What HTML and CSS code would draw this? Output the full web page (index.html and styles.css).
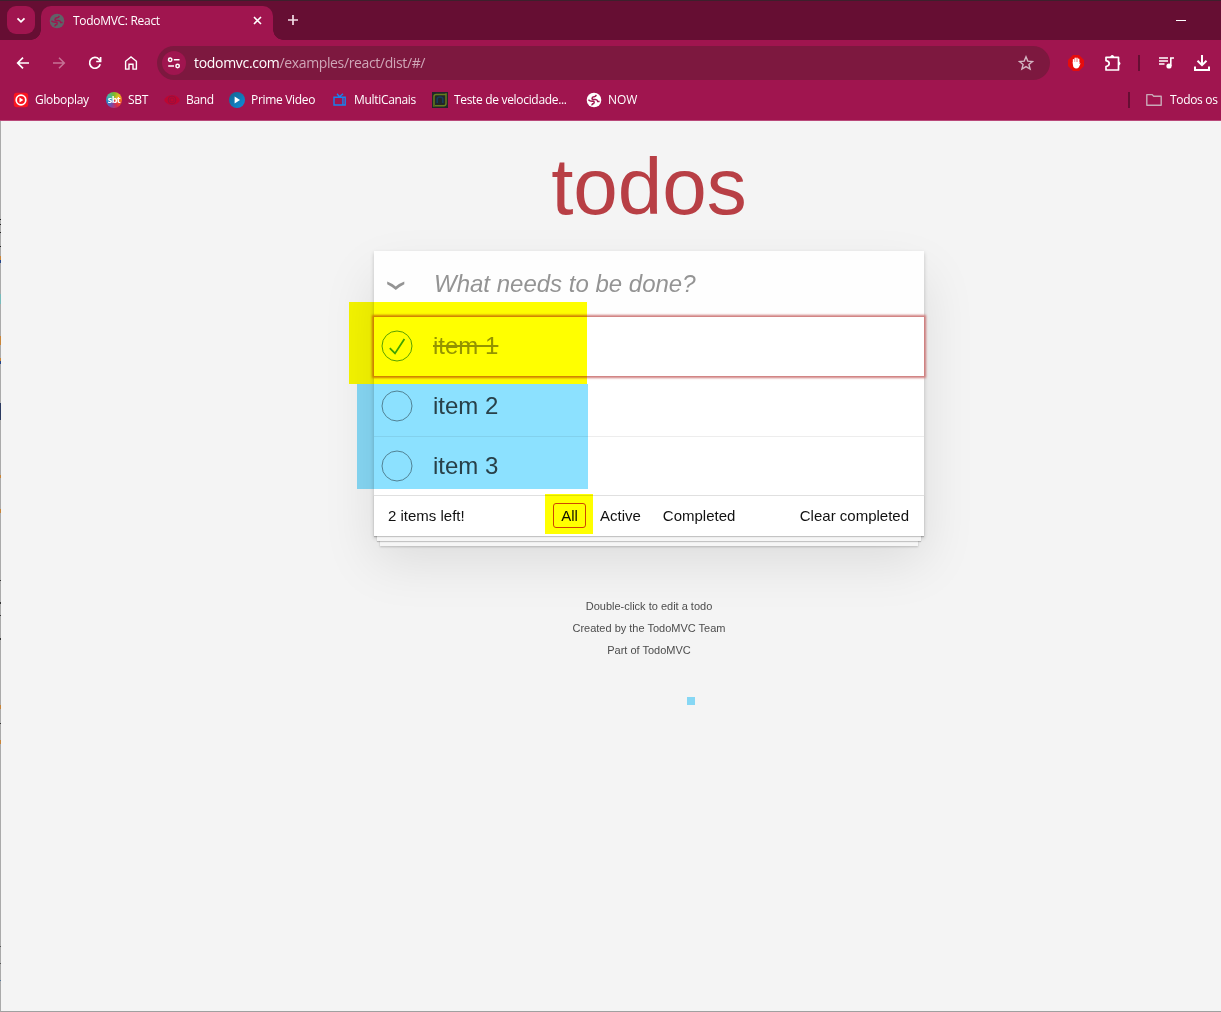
FILE: index.html
```html
<!DOCTYPE html>
<html lang="en">
<head>
<meta charset="utf-8">
<title>TodoMVC: React</title>
<link rel="stylesheet" href="styles.css">
</head>
<body>
<div class="window">
  <svg width="0" height="0" class="defs">
    <symbol id="globe" viewBox="0 0 16 16"><circle cx="8" cy="8" r="7.3" fill="currentColor"/><path class="land" d="M10.2 2.8Q10 4.6 8 4.8T6 6.7Q6.8 7.8 9 7.5T11.7 9.4H13.6M2.4 7.8Q4 9.5 6.6 9.3T7.6 11.6Q5.8 11.8 6 13.4" fill="none" stroke-width="1.5"/></symbol>
  </svg>
  <header class="tabstrip">
    <div class="tabsearch"><svg width="10" height="7" viewBox="0 0 10 7"><path d="M1.5 1.3 5 4.8 8.5 1.3" fill="none" stroke="#fff" stroke-width="1.8"/></svg></div>
    <div class="tab">
      <svg class="globe gray" width="16" height="16"><use href="#globe"/></svg>
      <span class="tabname">TodoMVC: React</span>
      <svg class="close" width="9" height="9" viewBox="0 0 9 9"><path d="M1 1 8 8M8 1 1 8" stroke="#fff" stroke-width="1.6"/></svg>
    </div>
    <svg class="newtab" width="12" height="12" viewBox="0 0 12 12"><path d="M6 1V11M1 6H11" stroke="#f2dce6" stroke-width="1.7"/></svg>
    <div class="minimize"></div>
  </header>
  <nav class="toolbar">
    <svg class="nav" width="16" height="16" viewBox="0 0 16 16"><path d="M14 8H3M8 2.7 2.7 8 8 13.3" fill="none" stroke="#fff" stroke-width="1.7"/></svg>
    <svg class="nav dim" width="16" height="16" viewBox="0 0 16 16"><path d="M2 8H13M8 2.7 13.3 8 8 13.3" fill="none" stroke="#fff" stroke-width="1.5"/></svg>
    <svg class="nav" width="16" height="16" viewBox="0 0 16 16"><path d="M13.2 9.3A5.4 5.4 0 1 1 12 4.2L13.4 6M13.6 2V6.5H9.2" fill="none" stroke="#fff" stroke-width="1.7"/></svg>
    <svg class="nav" width="16" height="16" viewBox="0 0 16 16"><path d="M2.6 14.1V6.3L8 2 13.4 6.3V14.1H10V9.3H6V14.1Z" fill="none" stroke="#fff" stroke-width="1.4"/></svg>
    <div class="address">
      <div class="siteinfo"><svg width="14" height="12" viewBox="0 0 14 12"><g fill="none" stroke="#fff" stroke-width="1.5"><circle cx="3.2" cy="2.8" r="1.7"/><circle cx="10.6" cy="9" r="1.7"/><path d="M6.8 2.8H12.5M1.2 9H7"/></g></svg></div>
      <span class="url"><b>todomvc.com</b>/examples/react/dist/#/</span>
      <svg class="star" width="16" height="16" viewBox="0 0 16 16"><path d="M8 1.8 9.8 6.1 14.5 6.5 10.9 9.5 12.1 14.1 8 11.6 3.9 14.1 5.1 9.5 1.5 6.5 6.2 6.1Z" fill="none" stroke="#d3b5c2" stroke-width="1.4"/></svg>
    </div>
    <svg class="hand" width="16" height="16" viewBox="0 0 16 16"><path d="M5 0H11L16 5V11L11 16H5L0 11V5Z" fill="#e60c0c"/><path d="M5.5 8V4.6M7.2 8V3.2M9 8V3.2M10.7 8V4.2" stroke="#fff" stroke-width="1.4" stroke-linecap="round"/><path d="M4.8 7H11.4V9L12.7 8.2 10.9 12.2Q9.5 13.9 6.9 13.3Q4.8 12.3 4.8 9Z" fill="#fff"/></svg>
    <svg class="puzzle" width="18" height="18" viewBox="0 0 18 18"><path d="M2 3.3H14.5V16H2V12.6Q5.2 12 5.2 9.6T2 6.7Z" fill="none" stroke="#fff" stroke-width="1.7" stroke-linejoin="round"/><path d="M6.3 3.2V2.5Q8.2 -.4 10.2 2.5V3.2M14.5 7.4H15Q18 9.5 15 11.6H14.5" fill="#fff"/></svg>
    <i class="divider"></i>
    <svg class="media" width="17" height="14" viewBox="0 0 17 14"><path d="M1 2H10M1 5H10M1 8H6.5M12.8 10V2H16" fill="none" stroke="#fff" stroke-width="1.6"/><circle cx="11" cy="10" r="2.6" fill="#fff"/></svg>
    <svg class="download" width="18" height="18" viewBox="0 0 18 18"><path d="M9 1V10M4.5 6.8 9 11.2 13.5 6.8M2 12.5V16H16V12.5" fill="none" stroke="#fff" stroke-width="2"/></svg>
  </nav>
  <nav class="bookmarks">
    <div class="bm"><svg width="16" height="16" viewBox="0 0 16 16"><rect x=".8" y=".8" width="14.4" height="14.4" rx="3" fill="#f91420"/><circle cx="8" cy="8" r="4.8" fill="none" stroke="#fff" stroke-width="1.7"/><path d="M6.5 5.6 10.4 8 6.5 10.4Z" fill="#fff"/></svg><span>Globoplay</span></div>
    <div class="bm"><span class="sbt">sbt</span><span>SBT</span></div>
    <div class="bm"><svg width="16" height="16" viewBox="0 0 16 16"><path d="M.2 8Q2 3.2 8 3.2T15.8 8Q14 12.8 8 12.8T.2 8Z" fill="#bd0631"/><circle cx="8" cy="8" r="3.9" fill="none" stroke="#94103f" stroke-width="1"/><circle cx="8" cy="8" r="2" fill="none" stroke="#94103f" stroke-width=".8"/></svg><span>Band</span></div>
    <div class="bm"><svg width="16" height="16" viewBox="0 0 16 16"><defs><linearGradient id="pv" x2="1" y2="1"><stop stop-color="#14648c"/><stop offset="1" stop-color="#0e8cdc"/></linearGradient></defs><circle cx="8" cy="8" r="8" fill="url(#pv)"/><path d="M5.6 4.6 11 8 5.6 11.4Z" fill="#fff"/></svg><span>Prime Video</span></div>
    <div class="bm"><svg width="16" height="16" viewBox="0 0 16 16"><path d="M2 5.2H13.2V13H2ZM10.9 5.2V13M5 1.8 7.5 4.8 11 1.8" fill="none" stroke="#1583ef" stroke-width="1.4"/></svg><span>MultiCanais</span></div>
    <div class="bm"><svg width="16" height="16" viewBox="0 0 16 16"><path d="M0 0H16V16H0Z" fill="#222629"/><path d="M1.2 14H2V4.5Q2 2.5 4.2 2.5H13.5M14.8 2H14V11.5Q14 13.8 11.8 13.8H3" fill="none" stroke="#657c1c" stroke-width="1.5"/><path d="M5.2 11V7Q5.2 5 8 5T10.8 7V11" fill="none" stroke="#163d59" stroke-width="1.6"/></svg><span>Teste de velocidade...</span></div>
    <div class="bm now"><svg class="globe white" width="16" height="16"><use href="#globe"/></svg><span>NOW</span></div>
    <i class="divider"></i>
    <div class="bm folder"><svg width="16" height="14" viewBox="0 0 16 14"><path d="M.8 1.6H6L7.7 3.2H15.2V12.3H.8Z" fill="none" stroke="#c9a9b7" stroke-width="1.4" stroke-linejoin="round"/></svg><span>Todos os</span></div>
  </nav>
  <main class="page">
    <div class="column">
      <h1>todos</h1>
      <section class="todoapp">
        <div class="entry"><svg width="20" height="12" viewBox="0 0 20 12"><path d="M1.2 1.6Q6.5 3.6 9.7 6.6 13 3.6 18.3 1.6V4.2Q13.2 6.8 9.8 10 6.2 6.8 1.2 4.2Z" fill="#949494"/></svg><span>What needs to be done?</span></div>
        <ul>
          <li class="done"><svg width="34" height="34" viewBox="0 0 34 34"><circle cx="17" cy="17" r="15" fill="none" stroke="#59a193"/><path d="M9.8 19.2 15 24.4 24.4 10" fill="none" stroke="#3ea390" stroke-width="1.8"/></svg><label>item 1</label></li>
          <li><svg width="34" height="34" viewBox="0 0 34 34"><circle cx="17" cy="17" r="15" fill="none" stroke="#949494"/></svg><label>item 2</label></li>
          <li><svg width="34" height="34" viewBox="0 0 34 34"><circle cx="17" cy="17" r="15" fill="none" stroke="#949494"/></svg><label>item 3</label></li>
        </ul>
        <footer>
          <span class="count">2 items left!</span>
          <a class="selected">All</a><a class="active">Active</a><a class="completed">Completed</a>
          <span class="clear">Clear completed</span>
        </footer>
      </section>
      <div class="info"><p>Double-click to edit a todo</p><p>Created by the TodoMVC Team</p><p>Part of TodoMVC</p></div>
    </div>
  </main>
  <div class="mark yellow items-done"></div>
  <div class="mark blue items-open"></div>
  <div class="mark yellow filter"></div>
  <div class="mark blue dot"></div>
  <div class="edge"></div>
</div>
</body>
</html>
```
FILE: styles.css
```css
* { box-sizing: border-box; }
body { margin: 0; overflow: hidden; }
.window { position: relative; width: 1221px; height: 1012px; overflow: hidden; background: #f4f4f4; font-family: "Open Sans", "Noto Sans", sans-serif; font-size: 12px; color: #fff; }
.window svg { display: block; flex: none; }
.window .defs { position: absolute; }
.globe.gray { color: #5f6368; }
.globe.white { color: #fff; }
.land { stroke: #a0154f; }

.tabstrip { display: flex; height: 40px; padding-left: 7px; background: #660e33; border-top: 1px solid #3c202c; }
.tabsearch { display: flex; align-items: center; justify-content: center; width: 28px; height: 28px; margin-top: 5px; border-radius: 9px; background: #a0154f; }
.tab { position: relative; display: flex; align-items: center; width: 232px; height: 34px; margin: 5px 0 0 6px; padding: 0 11px 5px 8px; border-radius: 10px 10px 0 0; background: #a0154f; }
.tab::before, .tab::after { content: ""; position: absolute; bottom: 0; width: 10px; height: 10px; }
.tab::before { left: -10px; background: radial-gradient(circle at 0 0, transparent 9.5px, #a0154f 10px); }
.tab::after { right: -10px; background: radial-gradient(circle at 100% 0, transparent 9.5px, #a0154f 10px); }
.tabname { margin-left: 8px; white-space: nowrap; letter-spacing: -.3px; }
.close { margin-left: auto; }
.newtab { margin: 13px 0 0 14px; }
.minimize { width: 10px; height: 1px; margin: 19px 35px 0 auto; background: #fff; }

.toolbar { display: flex; align-items: center; height: 46px; padding-left: 15px; background: #a0154f; }
.nav { margin-right: 20px; }
.nav.dim { opacity: .4; }
.address { display: flex; align-items: center; width: 893px; height: 34px; margin-left: -2px; padding: 0 16px 0 5px; border-radius: 17px; background: #7d183f; }
.siteinfo { display: flex; align-items: center; justify-content: center; width: 24px; height: 24px; border-radius: 12px; background: #a0154f; }
.url { margin: -2px 0 0 8px; font-size: 14px; letter-spacing: -.37px; color: #cfa6b7; white-space: nowrap; }
.url b { font-weight: 400; letter-spacing: -.3px; color: #fff; }
.star { margin-left: auto; }
.hand { margin-left: 18px; }
.puzzle { margin-left: 20px; }
.divider { flex: none; width: 2px; height: 16px; background: #660e33; }
.toolbar .divider { margin-left: 16px; }
.media { margin-left: 18px; }
.download { margin-left: 18px; }

.bookmarks { display: grid; grid-template-columns: 93px 58px 65px 103px 100px 154px 542px 18px 80px; align-items: center; height: 35px; padding: 0 0 7px 13px; background: #a0154f; border-bottom: 1px solid #b94879; }
.bm { display: flex; align-items: center; gap: 6px; white-space: nowrap; letter-spacing: -.32px; }
.now { letter-spacing: 0; }
.folder { gap: 8px; }
.sbt { display: flex; align-items: center; justify-content: center; width: 16px; height: 16px; border-radius: 50%; font: bold 9px "Open Sans", sans-serif; letter-spacing: -.5px; background: conic-gradient(#78b82a, #e8b820, #ef5c24, #d82c4c, #7c46a8, #2888cb, #48b8a0, #78b82a); }

.page { height: 891px; padding-left: 374px; font-family: "Liberation Sans", Arial, sans-serif; color: #111; }
.column { width: 550px; }
h1 { height: 130px; margin: 0; padding-top: 20px; font-size: 80px; font-weight: 400; line-height: 92px; text-align: center; color: #b83f45; }
.todoapp { background: #fff; box-shadow: 0 2px 4px rgba(0,0,0,.2), 0 25px 50px rgba(0,0,0,.1); }
.entry { display: flex; align-items: center; height: 65px; padding-left: 12px; font-size: 24px; font-style: italic; color: #949494; background: #fefefe; }
.entry svg { margin-top: 4px; }
.entry span { margin-left: 28px; }
ul { margin: 0; padding: 1px 0 0; list-style: none; }
li { display: flex; align-items: center; height: 61px; padding-left: 6px; font-size: 24px; color: #484848; border-bottom: 1px solid #ededed; }
li:last-child { height: 58px; border: 0; }
li label { margin-left: 19px; }
li.done { position: relative; z-index: 1; height: 59px; padding-bottom: 1px; border: 0; color: #949494; box-shadow: 0 0 2px 2px #cf7d7d; }
li.done label { text-decoration: line-through; }
footer { position: relative; display: flex; align-items: center; height: 41px; padding: 0 15px 2px 14px; font-size: 15px; border-top: 1px solid #e0e0e0; background: #fff; box-shadow: 0 1px 1px rgba(0,0,0,.2), 0 8px 0 -3px #f6f6f6, 0 9px 1px -3px rgba(0,0,0,.2), 0 16px 0 -6px #f6f6f6, 0 17px 2px -6px rgba(0,0,0,.2); }
.count { width: 165px; }
.selected { width: 33px; height: 25px; border: 1px solid #ce4646; border-radius: 3px; line-height: 24px; text-align: center; }
.active { margin-left: 14px; }
.completed { margin-left: 22px; }
.clear { margin-left: auto; }
.info { margin-top: 59px; font-size: 11px; text-align: center; color: #4d4d4d; }
.info p { margin: 0; height: 22px; line-height: 22px; }

.mark { position: absolute; z-index: 2; mix-blend-mode: multiply; }
.yellow { background: #ff0; }
.blue { background: #8ce1ff; }
.items-done { left: 349px; top: 302px; width: 238px; height: 82px; }
.items-open { left: 357px; top: 384px; width: 231px; height: 105px; }
.filter { left: 545px; top: 494px; width: 48px; height: 40px; }
.dot { left: 687px; top: 697px; width: 8px; height: 8px; }
.edge { position: absolute; inset: 121px 0 0; border-left: 1px solid #aaa; border-bottom: 1px solid #a0a0a0; }
.edge::before { content: ""; position: absolute; left: -1px; top: 0; width: 1px; height: 100%; background: linear-gradient(transparent 98px, #222 98px 99px, transparent 99px 103px, #222 103px 104px, transparent 104px 111px, #222 111px 112px, transparent 112px 125px, #222 125px 126px, transparent 126px 135px, #c98538 135px 139px, #248 139px 142px, transparent 142px 173px, #7bb 173px 183px, transparent 183px 215px, #c98538 215px 224px, transparent 224px 237px, #c98538 237px 240px, #248 240px 243px, transparent 243px 282px, #2b3a60 282px 299px, transparent 299px 354px, #c98538 354px 357px, transparent 357px 388px, #c98538 388px 392px, transparent 392px 459px, #333 459px 460px, transparent 460px 481px, #333 481px 483px, transparent 483px 494px, #333 494px 495px, transparent 495px 517px, #333 517px 519px, transparent 519px 584px, #c98538 584px 588px, transparent 588px 602px, #333 602px 603px, transparent 603px 619px, #c98538 619px 623px, transparent 623px 825px, #555 825px 826px, transparent 826px 842px, #555 842px 843px, transparent 843px 859px, #579 859px 860px, transparent 860px); }
```
